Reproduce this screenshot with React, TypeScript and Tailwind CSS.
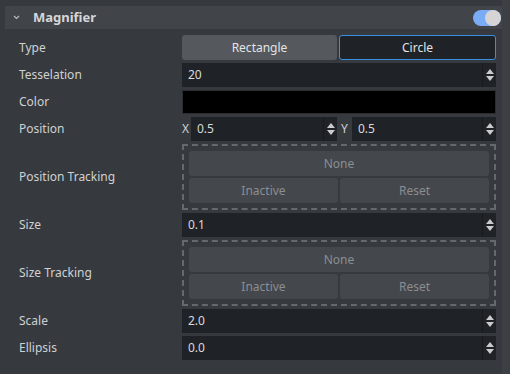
import React from "react";

const Spinner = () => (
  <div className="flex h-full w-[14px] flex-col items-center justify-center gap-[2px] border-l border-[#181a1d]">
    <svg width="8" height="5" viewBox="0 0 8 5"><path d="M4 0 L8 5 L0 5 Z" fill="#c9cbcd" /></svg>
    <svg width="8" height="5" viewBox="0 0 8 5"><path d="M0 0 L8 0 L4 5 Z" fill="#c9cbcd" /></svg>
  </div>
);

const NumInput = ({ value, className = "" }: { value: string; className?: string }) => (
  <div className={`flex h-full items-center bg-[#1f2226] ${className}`}>
    <span className="flex-1 pl-[6px] text-[12px] text-[#d8dadc]">{value}</span>
    <Spinner />
  </div>
);

const Row = ({ label, h = "h-[24px]", children }: { label: string; h?: string; children: React.ReactNode }) => (
  <div className={`flex ${h} items-center`}>
    <div className="w-[182px] pl-[19px] text-[12px] text-[#cfd1d3]">{label}</div>
    <div className="h-full w-[314px]">{children}</div>
  </div>
);

const Tracking = () => (
  <div className="flex h-full flex-col gap-[2px] border-2 border-dashed border-[#65686c] p-[5px]">
    <div className="flex h-[25px] items-center justify-center rounded-[3px] bg-[#44474b] text-[12px] text-[#8b8e92]">None</div>
    <div className="flex h-[25px] gap-[2px]">
      <div className="flex flex-1 items-center justify-center rounded-[3px] bg-[#44474b] text-[12px] text-[#8b8e92]">Inactive</div>
      <div className="flex flex-1 items-center justify-center rounded-[3px] bg-[#44474b] text-[12px] text-[#8b8e92]">Reset</div>
    </div>
  </div>
);

export default function App() {
  return (
    <div className="relative h-[374px] w-[510px] overflow-hidden bg-[#36393d]" style={{ fontFamily: '"Noto Sans", "Open Sans", sans-serif' }}>
      <div className="absolute right-0 top-0 h-full w-[8px] bg-[#3c3f43]" />
      <div className="flex flex-col pt-[6px]">
        <div className="ml-[5px] flex h-[23px] w-[497px] items-center bg-[#414448]">
          <svg className="ml-[8px]" width="7" height="5" viewBox="0 0 7 5"><path d="M1 1 L3.5 3.5 L6 1" stroke="#b8babc" strokeWidth="1.2" fill="none" /></svg>
          <span className="ml-[13px] text-[13px] font-bold text-[#d4d6d8]">Magnifier</span>
          <div className="ml-auto mr-[1px] flex h-[16px] w-[28px] items-center justify-end rounded-full bg-[#7aacf5]">
            <div className="h-[16px] w-[16px] rounded-full bg-[#d6d4d4]" />
          </div>
        </div>
        <div className="mt-[6px] flex flex-col gap-[3px]">
          <Row label="Type" h="h-[25px]">
            <div className="flex h-full gap-[2px]">
              <div className="flex flex-1 items-center justify-center rounded-[3px] bg-[#55585c] text-[12px] text-[#e2e4e6]">Rectangle</div>
              <div className="flex flex-1 items-center justify-center rounded-[3px] border border-[#3b8fe0] bg-[#1f2226] text-[12px] text-[#e2e4e6]">Circle</div>
            </div>
          </Row>
          <Row label="Tesselation"><NumInput value="20" /></Row>
          <Row label="Color"><div className="h-full border border-[#2a2c30] bg-black" /></Row>
          <Row label="Position">
            <div className="flex h-full items-center">
              <span className="w-[9px] text-[12px] text-[#cfd1d3]">X</span>
              <NumInput value="0.5" className="w-[146px]" />
              <span className="w-[15px] pl-[4px] text-[12px] text-[#cfd1d3]">Y</span>
              <NumInput value="0.5" className="flex-1" />
            </div>
          </Row>
          <Row label="Position Tracking" h="h-[66px]"><Tracking /></Row>
          <Row label="Size"><NumInput value="0.1" /></Row>
          <Row label="Size Tracking" h="h-[66px]"><Tracking /></Row>
          <Row label="Scale"><NumInput value="2.0" /></Row>
          <Row label="Ellipsis"><NumInput value="0.0" /></Row>
        </div>
      </div>
    </div>
  );
}
